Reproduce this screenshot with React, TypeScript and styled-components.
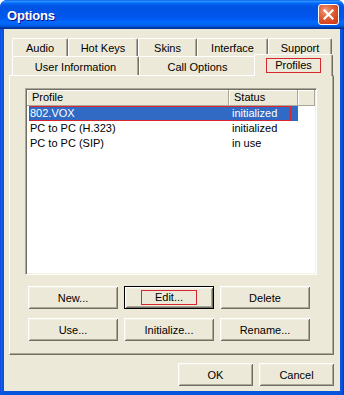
import React from "react";
import styled, { createGlobalStyle } from "styled-components";

const GlobalStyle = createGlobalStyle`
  html, body { margin: 0; padding: 0; background: #ffffff; }
  body {
    width: 344px; height: 395px; overflow: hidden;
    font-family: "Liberation Sans", Arial, sans-serif;
    font-size: 11px; color: #000;
  }
  * { box-sizing: border-box; }
`;

const FACE = "#ECE9D8";
const SHADOW = "#ACA899";
const DARK = "#716F64";
const LIGHT = "#F1EFE2";
const ANNOT = "#D8262F";

const Window = styled.div`
  width: 344px;
  height: 395px;
  display: flex;
  flex-direction: column;
  border-radius: 7px 7px 0 0;
  overflow: hidden;
  background: linear-gradient(to right, #0831D9 0, #166AEE 1px, #0855DD 2px, #0855DD 342px, #0841D9 343px, #0831D9 344px);
`;

const TitleBar = styled.div`
  height: 29px;
  flex: none;
  display: flex;
  align-items: center;
  justify-content: space-between;
  padding: 0 5px 0 7px;
  background: linear-gradient(to bottom, #0058EE 0%, #3593FF 4%, #288EFF 6%, #127DFF 8%, #036FFC 10%, #0262EE 14%, #0057E5 20%, #0054E3 24%, #0055EB 56%, #005BF5 66%, #026AFE 76%, #0062EF 86%, #0052D6 92%, #0040AB 94%, #003092 100%);
`;

const Title = styled.span`
  color: #fff;
  font-family: "Liberation Sans", Arial, sans-serif;
  font-weight: bold;
  font-size: 13px;
  letter-spacing: -0.2px;
  text-shadow: 1px 1px #0F1089;
  padding-top: 1px;
`;

const CloseButton = styled.div`
  width: 21px;
  height: 21px;
  border: 1px solid #fff;
  border-radius: 3px;
  background: radial-gradient(circle at 35% 30%, #F0A080 0%, #E2663F 35%, #D6461F 70%, #C43610 100%);
  display: flex;
  align-items: center;
  justify-content: center;
`;

const Client = styled.div`
  flex: 1;
  margin: 0 4px 4px 4px;
  background: ${FACE};
  display: flex;
  flex-direction: column;
  padding: 9px 6px 0 5px;
`;

const TabControl = styled.div`
  display: flex;
  flex-direction: column;
`;

const TabRow = styled.div<{ $h: number }>`
  display: flex;
  height: ${(p) => p.$h}px;
  padding: 0 2px 0 3px;
  position: relative;
`;

const Tab = styled.div<{ $w: number; $selected?: boolean }>`
  width: ${(p) => p.$w}px;
  flex: none;
  display: flex;
  align-items: center;
  justify-content: center;
  background: ${FACE};
  border-top: 1px solid #fff;
  border-left: 1px solid #fff;
  border-right: 1px solid ${DARK};
  border-radius: 2px 2px 0 0;
  box-shadow: inset -1px 0 ${SHADOW};
  padding-top: 1px;
  position: relative;
  ${(p) =>
    p.$selected &&
    `
    margin: -2px -2px -1px -2px;
    width: ${p.$w + 4}px;
    z-index: 2;
    padding-top: 0;
  `}
`;

const Annotated = styled.span<{ $pad?: string }>`
  border: 1px solid ${ANNOT};
  padding: ${(p) => p.$pad || "0 8px"};
  line-height: 13px;
`;

const Panel = styled.div`
  height: 280px;
  background: ${FACE};
  border-top: 1px solid #fff;
  border-left: 1px solid #fff;
  border-right: 1px solid ${DARK};
  border-bottom: 1px solid ${DARK};
  box-shadow: inset -1px -1px ${SHADOW};
  display: flex;
  flex-direction: column;
  padding: 12px 16px 0 15px;
  position: relative;
  z-index: 1;
`;

const ListBox = styled.div`
  height: 187px;
  background: #fff;
  border-top: 1px solid ${SHADOW};
  border-left: 1px solid ${SHADOW};
  border-right: 1px solid #fff;
  border-bottom: 1px solid #fff;
  box-shadow: inset 1px 1px ${DARK}, inset -1px -1px ${LIGHT};
  padding: 1px;
  display: flex;
  flex-direction: column;
`;

const Header = styled.div`
  display: flex;
  height: 16px;
  flex: none;
`;

const HeaderCell = styled.div<{ $w?: number }>`
  ${(p) => (p.$w ? `width: ${p.$w}px; flex: none;` : "flex: 1;")}
  background: ${FACE};
  border-right: 1px solid ${SHADOW};
  border-bottom: 1px solid ${SHADOW};
  box-shadow: inset 1px 1px #fff;
  padding-left: 5px;
  display: flex;
  align-items: center;
  line-height: 13px;
`;

const Row = styled.div<{ $selected?: boolean }>`
  display: grid;
  grid-template-columns: 200px 69px;
  height: 15px;
  margin-left: 2px;
  width: 269px;
  align-items: center;
  position: relative;
  background: ${(p) => (p.$selected ? "#316AC5" : "transparent")};
  color: ${(p) => (p.$selected ? "#fff" : "#000")};
`;

const RowOutline = styled.div`
  position: absolute;
  left: 0;
  top: 0;
  width: 262px;
  height: 15px;
  border: 1px solid ${ANNOT};
`;

const Cell = styled.div<{ $pad: number }>`
  padding-left: ${(p) => p.$pad}px;
  white-space: nowrap;
  line-height: 13px;
`;

const ButtonGrid = styled.div`
  display: grid;
  grid-template-columns: repeat(3, 90px);
  column-gap: 6px;
  row-gap: 9px;
  margin: 11px 0 0 3px;
`;

const Button = styled.div<{ $default?: boolean; $w?: number }>`
  height: 23px;
  ${(p) => (p.$w ? `width: ${p.$w}px;` : "")}
  background: ${FACE};
  display: flex;
  align-items: center;
  justify-content: center;
  box-shadow: inset 1px 1px #fff, inset -1px -1px ${DARK}, inset 2px 2px ${LIGHT}, inset -2px -2px ${SHADOW};
  ${(p) => (p.$default ? "border: 1px solid #000;" : "")}
`;

const Footer = styled.div`
  display: flex;
  justify-content: flex-end;
  gap: 6px;
  margin-top: 8px;
`;

const tabs1 = [
  { label: "Audio", w: 56 },
  { label: "Hot Keys", w: 70 },
  { label: "Skins", w: 59 },
  { label: "Interface", w: 71 },
  { label: "Support", w: 64 },
];

const rows = [
  { name: "802.VOX", status: "initialized", selected: true },
  { name: "PC to PC (H.323)", status: "initialized" },
  { name: "PC to PC (SIP)", status: "in use" },
];

export default function App() {
  return (
    <>
      <GlobalStyle />
      <Window>
        <TitleBar>
          <Title>Options</Title>
          <CloseButton>
            <svg width="11" height="11" viewBox="0 0 11 11">
              <path d="M1.5 1.5 L9.5 9.5 M9.5 1.5 L1.5 9.5" stroke="#fff" strokeWidth="2.2" strokeLinecap="square" />
            </svg>
          </CloseButton>
        </TitleBar>
        <Client>
          <TabControl>
            <TabRow $h={18}>
              {tabs1.map((t) => (
                <Tab key={t.label} $w={t.w}>
                  {t.label}
                </Tab>
              ))}
            </TabRow>
            <TabRow $h={19}>
              <Tab $w={127}>User Information</Tab>
              <Tab $w={117}>Call Options</Tab>
              <Tab $w={75} $selected>
                <Annotated $pad="0 8px 0 8px">Profiles</Annotated>
              </Tab>
            </TabRow>
            <Panel>
              <ListBox>
                <Header>
                  <HeaderCell $w={202}>Profile</HeaderCell>
                  <HeaderCell $w={69}>Status</HeaderCell>
                  <HeaderCell />
                </Header>
                {rows.map((r) => (
                  <Row key={r.name} $selected={r.selected}>
                    <Cell $pad={1}>{r.name}</Cell>
                    <Cell $pad={3}>{r.status}</Cell>
                    {r.selected && <RowOutline />}
                  </Row>
                ))}
              </ListBox>
              <ButtonGrid>
                <Button>New...</Button>
                <Button $default>
                  <Annotated $pad="0 13px">Edit...</Annotated>
                </Button>
                <Button>Delete</Button>
                <Button>Use...</Button>
                <Button>Initialize...</Button>
                <Button>Rename...</Button>
              </ButtonGrid>
            </Panel>
          </TabControl>
          <Footer>
            <Button $w={75}>OK</Button>
            <Button $w={75}>Cancel</Button>
          </Footer>
        </Client>
      </Window>
    </>
  );
}
